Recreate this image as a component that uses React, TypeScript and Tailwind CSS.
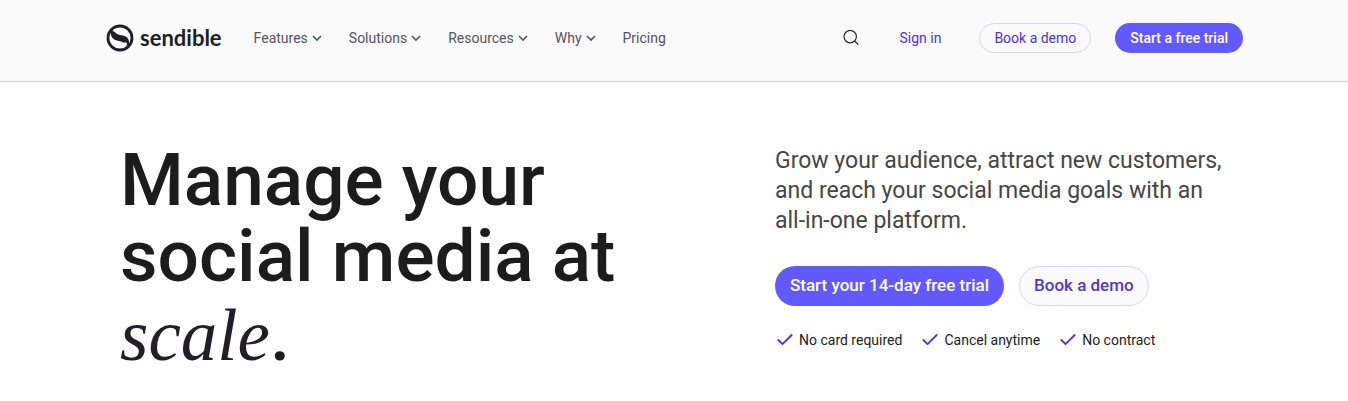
import { Check } from "lucide-react"

const navItems = [
  { label: "Features", hasMenu: true },
  { label: "Solutions", hasMenu: true },
  { label: "Resources", hasMenu: true },
  { label: "Why", hasMenu: true },
  { label: "Pricing", hasMenu: false },
]

const perks = ["No card required", "Cancel anytime", "No contract"]

function Logo() {
  return (
    <a href="#" className="flex items-center gap-1.5 text-[#1f1d25]">
      <svg viewBox="0 0 28 28" className="h-7 w-7" aria-hidden="true">
        <circle cx="14" cy="14" r="12" fill="none" stroke="currentColor" strokeWidth="2.8" />
        {/* S ribbon */}
        <path
          d="M5 6.5L8.6 6.4C8.4 9.6 12.6 10.6 17 11.6C21.6 12.7 23.8 15.6 23 21.5L19.4 21.6C19.6 18.4 15.4 17.4 11 16.4C6.4 15.3 4.2 12.4 5 6.5Z"
          fill="currentColor"
        />
        <circle cx="9" cy="6.4" r="1.7" fill="#fafafa" />
        <circle cx="19.3" cy="20" r="1.7" fill="#fafafa" />
      </svg>
      <span className="font-[Lato,sans-serif] text-[22px] leading-7 font-bold">sendible</span>
    </a>
  )
}

function Chevron() {
  return (
    <svg viewBox="0 0 10 10" className="h-2.5 w-2.5" fill="none" stroke="currentColor" strokeWidth="1.6" aria-hidden="true">
      <path d="M1 3L5 7L9 3" />
    </svg>
  )
}

function Header() {
  return (
    <header className="border-b border-[#d6d6d8] bg-[#fafafa] pt-[23px] pb-7">
      <div className="mx-auto flex max-w-[1138px] items-center pl-px">
        <Logo />
        <nav className="ml-8 flex items-center gap-[27px] text-sm text-[#55535e]">
          {navItems.map((item) => (
            <a key={item.label} href="#" className="flex items-center gap-1">
              {item.label}
              {item.hasMenu && <Chevron />}
            </a>
          ))}
        </nav>
        <div className="ml-auto flex items-center text-sm text-[#4f2ef0]">
          <button type="button" aria-label="Search" className="mr-10 text-[#25232b]">
            <svg viewBox="0 0 16 16" className="h-4 w-4" fill="none" stroke="currentColor" strokeWidth="1.2">
              <circle cx="7.2" cy="6.6" r="6.2" />
              <path d="M11.6 11L15.2 14.6" />
            </svg>
          </button>
          <a href="#" className="mr-[38px]">
            Sign in
          </a>
          <button type="button" className="mr-6 h-[30px] rounded-full border border-[#dad5f5] px-3.5">
            Book a demo
          </button>
          <button type="button" className="h-[30px] rounded-full bg-[#6259ff] px-[15px] font-medium text-white">
            Start a free trial
          </button>
        </div>
      </div>
    </header>
  )
}

function Hero() {
  return (
    <main className="mx-auto grid max-w-[1108px] grid-cols-[655px_1fr] pt-[60px] pb-8">
      <h1 className="text-[73px] leading-[76px] font-medium text-[#1c1c1c]">
        Manage your
        <br />
        social media at
        <br />
        <em className="font-['Liberation_Serif',serif] text-[73px] leading-[84px] font-normal text-[#211e26]">scale</em>.
      </h1>
      <div>
        <p className="pt-1 text-[23px] leading-[30px] text-[#464646]">
          Grow your audience, attract new customers,
          <br />
          and reach your social media goals with an
          <br />
          all-in-one platform.
        </p>
        <div className="mt-[30px] flex gap-[15px] text-[17px] font-medium">
          <button type="button" className="h-10 rounded-full bg-[#6259ff] px-[15px] text-white">
            Start your 14-day free trial
          </button>
          <button type="button" className="h-10 rounded-full border border-[#dad5f5] bg-[#fafafa] px-3.5 text-[#5236d2]">
            Book a demo
          </button>
        </div>
        <ul className="mt-6 flex gap-[18px] text-sm text-[#222222]">
          {perks.map((perk) => (
            <li key={perk} className="flex items-center gap-1">
              <Check className="h-5 w-5 text-[#4f2ef0]" strokeWidth={2.2} />
              {perk}
            </li>
          ))}
        </ul>
      </div>
    </main>
  )
}

export default function App() {
  return (
    <div className="min-h-screen bg-white font-[Roboto,sans-serif]">
      <Header />
      <Hero />
    </div>
  )
}
